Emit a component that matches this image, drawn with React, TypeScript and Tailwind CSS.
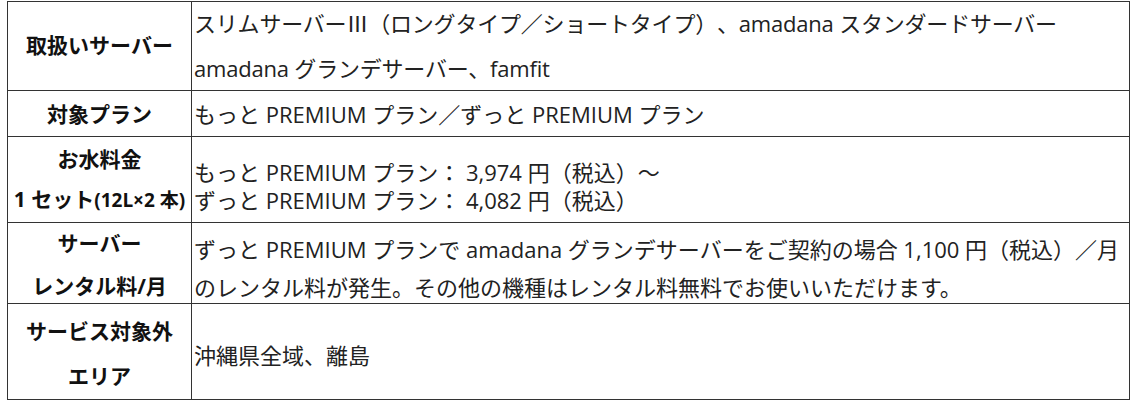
const cjk = { fontFamily: '"Noto Sans CJK JP", sans-serif' }

export default function App() {
  const cell = "border-r border-b border-[#333] flex flex-col"
  const th = `${cell} items-center justify-center text-center font-bold text-[21px] text-[#111]`
  const td = `${cell} justify-center pl-[2px] text-[22px] text-[#222] whitespace-nowrap [text-spacing-trim:space-all]`

  return (
    <div
      className="w-[1136px] h-[408px] bg-white pt-px pl-[7px]"
      style={{ fontFamily: '"Open Sans", "Noto Sans CJK JP", sans-serif' }}
    >
      <div className="w-[1123px] grid grid-cols-[184px_1fr] grid-rows-[89px_46px_86px_81px_96px] border-t border-l border-[#333]">
        {/* 取扱いサーバー */}
        <div className={`${th} leading-[45px] pb-[1px]`}>取扱いサーバー</div>
        <div className={`${td} leading-[45px] pb-[2px] tracking-[-0.2px]`}>
          <div>
            スリムサーバー<span style={cjk}>Ⅲ</span>（ロングタイプ／ショートタイプ）、amadana スタンダードサーバー
          </div>
          <div>amadana グランデサーバー、famfit</div>
        </div>

        {/* 対象プラン */}
        <div className={`${th} leading-[30px]`}>対象プラン</div>
        <div className={`${td} leading-[30px]`}>もっと PREMIUM プラン／ずっと PREMIUM プラン</div>

        {/* お水料金 */}
        <div className={`${th} leading-[40px]`}>
          <div>お水料金</div>
          <div>
            <span>1 セット</span>
            <span className="text-[19px]">(12L×2 本)</span>
          </div>
        </div>
        <div className={`${td} leading-[28px] pt-[12px]`}>
          <div>もっと PREMIUM プラン： 3,974 円（税込）〜</div>
          <div>ずっと PREMIUM プラン： 4,082 円（税込）</div>
        </div>

        {/* サーバーレンタル料 */}
        <div className={`${th} leading-[43px] pt-[4px]`}>
          <div>サーバー</div>
          <div>レンタル料/月</div>
        </div>
        <div className={`${td} leading-[38px] pt-[9px]`}>
          <div>ずっと PREMIUM プランで amadana グランデサーバーをご契約の場合 1,100 円（税込）／月</div>
          <div>のレンタル料が発生。その他の機種はレンタル料無料でお使いいただけます。</div>
        </div>

        {/* サービス対象外エリア */}
        <div className={`${th} leading-[45px] pt-[5px]`}>
          <div>サービス対象外</div>
          <div>エリア</div>
        </div>
        <div className={`${td} leading-[30px] pt-[6px]`}>沖縄県全域、離島</div>
      </div>
    </div>
  )
}
